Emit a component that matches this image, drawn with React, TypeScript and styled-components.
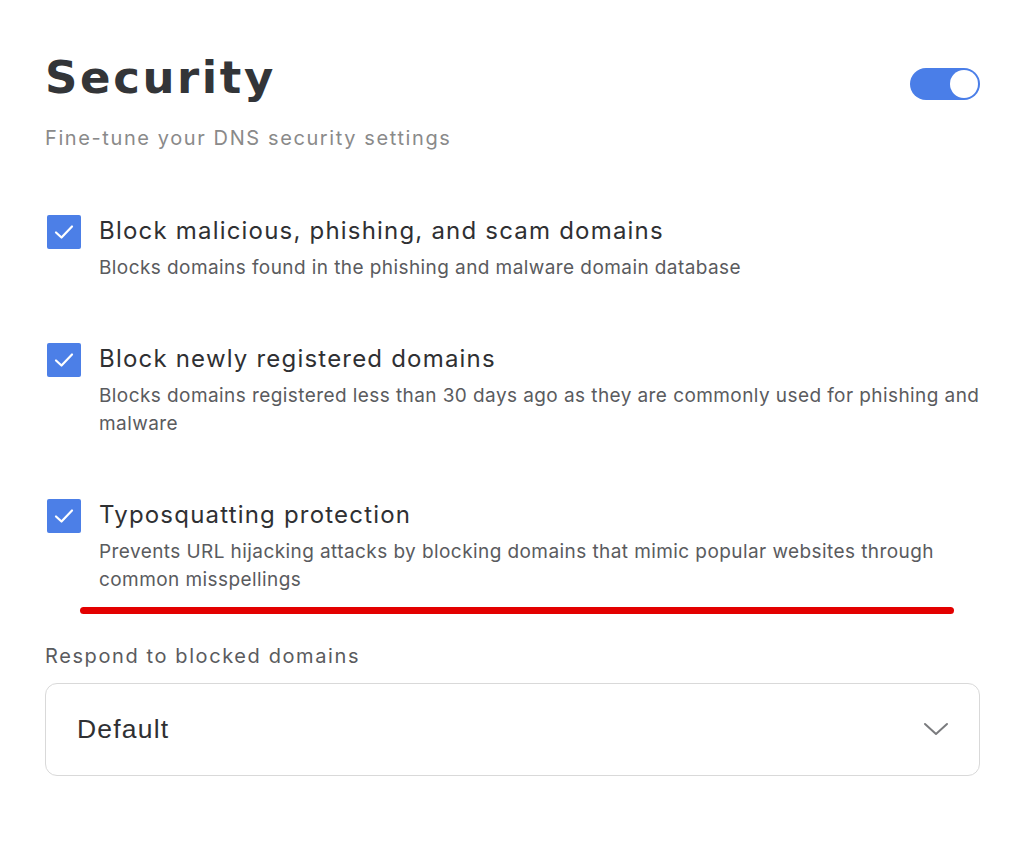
import styled, { createGlobalStyle } from "styled-components";

const GlobalStyle = createGlobalStyle`
    body {
        margin: 0;
        background: #ffffff;
        font-family: Inter, "Noto Sans", sans-serif;
    }
`;

const Page = styled.div`
    padding: 52px 44px 60px 45px;
`;

const Header = styled.div`
    display: flex;
    justify-content: space-between;
    align-items: flex-start;
`;

const Title = styled.h1`
    margin: 0;
    font-family: "DejaVu Sans", Inter, sans-serif;
    font-size: 45px;
    line-height: 52px;
    font-weight: 700;
    color: #333538;
    letter-spacing: 2.6px;
`;

const Subtitle = styled.p`
    margin: 20px 0 0;
    font-size: 20px;
    line-height: 28px;
    color: #8a8a8a;
    letter-spacing: 1.6px;
`;

const Toggle = styled.div<{ $on: boolean }>`
    position: relative;
    width: 70px;
    height: 32px;
    margin-top: 16px;
    border-radius: 16px;
    background: ${(p) => (p.$on ? "#4a7ee8" : "#ccc")};

    &:after {
        content: "";
        position: absolute;
        top: 2px;
        left: ${(p) => (p.$on ? "40px" : "2px")};
        width: 28px;
        height: 28px;
        border-radius: 50%;
        background: #ffffff;
    }
`;

const Options = styled.div`
    display: flex;
    flex-direction: column;
    gap: 60px;
    margin: 63px -8px 0 0;
`;

const Option = styled.div`
    display: flex;
    gap: 18px;
    align-items: flex-start;
`;

const Check = styled.div`
    width: 34px;
    height: 34px;
    flex-shrink: 0;
    margin-left: 2px;
    border-radius: 2px;
    background: #4c7fe7;
    display: flex;
    align-items: center;
    justify-content: center;
`;

const OptionText = styled.div`
    display: flex;
    flex-direction: column;
    gap: 7px;
`;

const OptionLabel = styled.div`
    font-size: 24px;
    line-height: 32px;
    color: #2f3033;
    letter-spacing: 1.2px;
`;

const OptionDesc = styled.div`
    font-size: 19px;
    line-height: 28.5px;
    color: #5a5b5e;
    letter-spacing: 0.42px;
`;

const Highlight = styled.div`
    height: 7px;
    margin: 12px 26px 0 35px;
    border-radius: 4px;
    background: #e30000;
`;

const FieldLabel = styled.div`
    margin-top: 28px;
    font-size: 20px;
    line-height: 28px;
    color: #5a5b5e;
    letter-spacing: 1.6px;
`;

const Select = styled.div`
    margin-top: 13px;
    height: 91px;
    border: 1px solid #d9d9d9;
    border-radius: 12px;
    display: flex;
    align-items: center;
    justify-content: space-between;
    padding: 0 30px 0 31px;
`;

const SelectValue = styled.span`
    font-family: "Liberation Sans", Arial, sans-serif;
    font-size: 26.5px;
    color: #2f3033;
    letter-spacing: 1.2px;
`;

const CheckIcon = () => (
    <svg width="20" height="16" viewBox="0 0 20 16">
        <path d="M2 8.5 L7.5 13.5 L18 2.5" fill="none" stroke="#fff" strokeWidth="2.2" strokeLinecap="round" strokeLinejoin="round" />
    </svg>
);

const Chevron = () => (
    <svg width="26" height="14" viewBox="0 0 26 14">
        <path d="M2 2 L13 12 L24 2" fill="none" stroke="#7a7b7e" strokeWidth="2" strokeLinecap="round" strokeLinejoin="round" />
    </svg>
);

const options = [
    {
        label: "Block malicious, phishing, and scam domains",
        desc: "Blocks domains found in the phishing and malware domain database",
    },
    {
        label: "Block newly registered domains",
        desc: "Blocks domains registered less than 30 days ago as they are commonly used for phishing and malware",
    },
    {
        label: "Typosquatting protection",
        desc: "Prevents URL hijacking attacks by blocking domains that mimic popular websites through common misspellings",
    },
];

const App = () => {
    return (
        <Page>
            <GlobalStyle />
            <Header>
                <div>
                    <Title>Security</Title>
                    <Subtitle>Fine-tune your DNS security settings</Subtitle>
                </div>
                <Toggle $on />
            </Header>
            <Options>
                {options.map((o) => (
                    <Option key={o.label}>
                        <Check>
                            <CheckIcon />
                        </Check>
                        <OptionText>
                            <OptionLabel>{o.label}</OptionLabel>
                            <OptionDesc>{o.desc}</OptionDesc>
                        </OptionText>
                    </Option>
                ))}
            </Options>
            <Highlight />
            <FieldLabel>Respond to blocked domains</FieldLabel>
            <Select>
                <SelectValue>Default</SelectValue>
                <Chevron />
            </Select>
        </Page>
    );
};

export default App;
